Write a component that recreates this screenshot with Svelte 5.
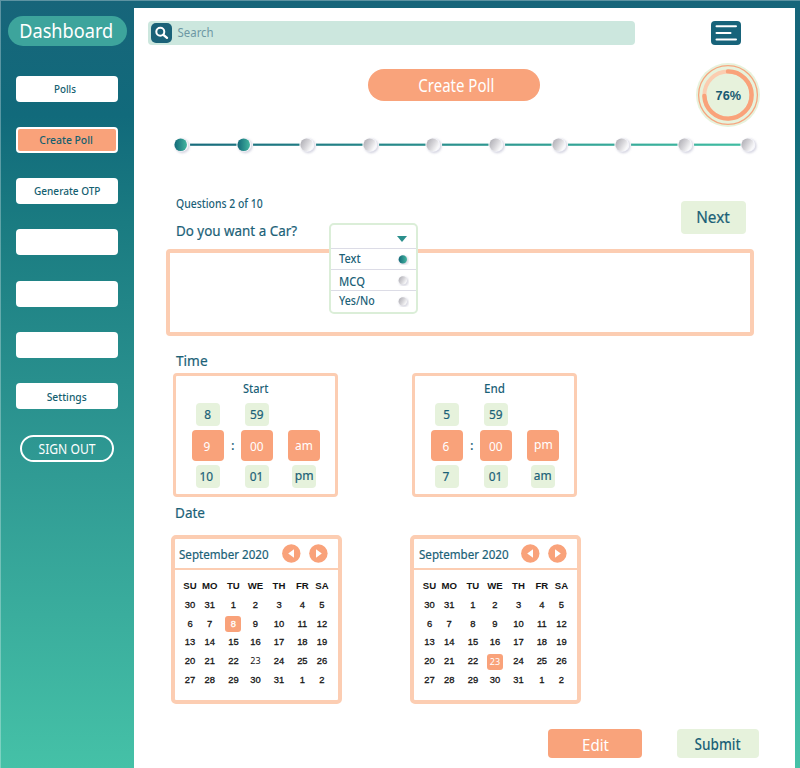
<script>
  const nav = [
    { text: 'Polls', w: 22, dx: -2, dy: 0.2 },
    { text: 'Create Poll', w: 53.5, active: true, dx: -0.7, dy: 0 },
    { text: 'Generate OTP', w: 66.5, dx: 0, dy: 0.6 },
    { text: '' },
    { text: '' },
    { text: '' },
    { text: 'Settings', w: 40, dx: -0.3, dy: 0.4 }
  ];

  const steps = Array.from({ length: 10 }, (_, i) => ({
    x: 9 + i * 63,
    done: i < 2
  }));

  const options = [
    { text: 'Text', w: 21.6, dy: 0 },
    { text: 'MCQ', w: 26, dy: 1.4 },
    { text: 'Yes/No', w: 35.8, dy: 0 }
  ];
  const chosen = 0;

  const times = [
    {
      title: 'Start', tw: 25.5,
      prev: ['8', '59'],
      now: [['9', 0], ['00', 0], ['am', -1.2]],
      next: ['10', '01', 'pm']
    },
    {
      title: 'End', tw: 21,
      prev: ['5', '59'],
      now: [['6', 0], ['00', 0], ['pm', -1.6]],
      next: ['7', '01', 'am']
    }
  ];
  const widths = { am: 17.8, pm: 18.8 };
  const tw = (s) => widths[s] ?? s.length * 6.8;

  const heads = ['SU', 'MO', 'TU', 'WE', 'TH', 'FR', 'SA'];
  const days = [30, 31, ...Array.from({ length: 31 }, (_, i) => i + 1), 1, 2];
  const calendars = [{ selected: 8 }, { selected: 23 }];
</script>

{#snippet label(text, w, size, cls = '', dx = 0, dy = 0)}
  <svg class="label {cls}" width={w} height={size}>
    <text x={dx} y={size * 0.857 + dy} font-size={size} textLength={w} lengthAdjust="spacingAndGlyphs">{text}</text>
  </svg>
{/snippet}

<div class="page">
  <aside>
    <div class="brand">{@render label('Dashboard', 94, 19, 'white', -1.8, 0)}</div>
    <nav>
      {#each nav as item}
        <button class:active={item.active}>
          {#if item.text}{@render label(item.text, item.w, 11.5, 'deep', item.dx, item.dy)}{/if}
        </button>
      {/each}
    </nav>
    <button class="signout">{@render label('SIGN OUT', 57, 13.8, 'white', -0.5, 0.5)}</button>
  </aside>

  <main>
    <header>
      <div class="search">
        <span class="glass">
          <svg width="21" height="20" viewBox="0 0 21 20">
            <circle cx="9.3" cy="8.8" r="4" fill="none" stroke="#fff" stroke-width="2" />
            <path d="M12.4 11.8 L16 14.8" stroke="#fff" stroke-width="2.4" stroke-linecap="round" />
          </svg>
        </span>
        {@render label('Search', 36, 12, 'muted', 0.6, 0)}
      </div>
      <button class="menu" aria-label="Menu">
        <svg width="30" height="24" viewBox="0 0 30 24" stroke="#fff" stroke-width="2" stroke-linecap="round">
          <path d="M5.5 5.3 H25 M5.5 12 H19.5 M5.5 18.6 H25" />
        </svg>
      </button>
    </header>

    <section class="hero">
      <div class="title">{@render label('Create Poll', 76, 17.2, 'white', 2.3, 1.4)}</div>
      <svg class="ring" width="66" height="66" viewBox="0 0 66 66">
        <circle cx="33" cy="33" r="32" fill="#e7f2dc" />
        <circle cx="33" cy="33" r="29.4" fill="none" stroke="#f6a67f" stroke-width="1.3" />
        <circle cx="33" cy="33" r="23.6" fill="none" stroke="#fbcdb0" stroke-width="4" />
        <path d="M33 9.4 A23.6 23.6 0 1 1 9.4 34" fill="none" stroke="#f9a27a" stroke-width="4.4" stroke-linecap="round" />
        <text x="20.6" y="38.2" font-size="12.8" textLength="25.4" lengthAdjust="spacingAndGlyphs" class="pct">76%</text>
      </svg>
    </section>

    <svg class="steps" width="590" height="24" viewBox="0 0 590 24">
      <defs>
        <linearGradient id="line" gradientUnits="userSpaceOnUse" x1="0" y1="0" x2="590" y2="0">
          <stop offset="0" stop-color="#17697b" /><stop offset="1" stop-color="#41bfa3" />
        </linearGradient>
        <linearGradient id="on"><stop offset="0.1" stop-color="#17707c" /><stop offset="1" stop-color="#44b6a0" /></linearGradient>
        <linearGradient id="off" x1="0" y1="0.2" x2="1" y2="0.8">
          <stop offset="0.05" stop-color="#b3b2b8" /><stop offset="0.5" stop-color="#d6d5d9" /><stop offset="0.9" stop-color="#fafafb" />
        </linearGradient>
        <filter id="soft" x="-50%" y="-50%" width="200%" height="200%"><feGaussianBlur stdDeviation="1.1" /></filter>
      </defs>
      {#each steps as s, i}
        {#if i < 9}<rect x={s.x + 9} y="10.6" width="46.5" height="2.2" fill="url(#line)" />{/if}
        <circle cx={s.x + 1.4} cy="13" r="7.2" fill="#c0c0d2" opacity="0.7" filter="url(#soft)" />
        <circle cx={s.x + 0.5} cy="12" r="6.8" fill="#f5f5fa" />
        <circle cx={s.x - 0.3} cy="11.8" r="6.3" fill={s.done ? 'url(#on)' : 'url(#off)'} />
      {/each}
    </svg>

    <section class="question">
      <div class="ask">
        {@render label('Questions 2 of 10', 86.6, 11.9, 'navy')}
        {@render label('Do you want a Car?', 121, 14.6, 'navy soft')}
      </div>
      <button class="pale next">{@render label('Next', 33.6, 16.2, 'navy soft', -0.8, -0.3)}</button>
      <div class="dropdown">
        <div class="picked"><svg width="10" height="6"><path d="M0 0 H10 L5 6 Z" fill="#2b8f8c" /></svg></div>
        {#each options as o, i}
          <div class="option">
            {@render label(o.text, o.w, 12, 'navy', 0, o.dy)}
            <svg width="12" height="12" viewBox="0 0 12 12">
              <circle cx="6.8" cy="7.4" r="4.6" fill="#d5d5df" filter="url(#soft)" />
              <circle cx="5.8" cy="6.4" r="4.2" fill={i === chosen ? 'url(#on)' : 'url(#off)'} />
            </svg>
          </div>
        {/each}
      </div>
    </section>

    <div class="answer"></div>

    <div class="heading time">{@render label('Time', 31.6, 14.6, 'navy soft')}</div>
    <section class="pair clocks">
      {#each times as t}
        <div class="clock">
          <div class="cap">{@render label(t.title, t.tw, 12, 'navy')}</div>
          <div class="row small">
            {#each t.prev as v}<span>{@render label(v, tw(v), 12.2, 'navy soft', v.length > 1 ? 0 : -0.7, 0.3)}</span>{/each}
          </div>
          <div class="row big">
            {#each t.now as v, i}
              <span>{@render label(v[0], tw(v[0]), 12.4, 'white', i ? 0 : -1.6, v[1] + (i ? 1.2 : 1.8))}</span>
              {#if i === 0}<div class="colon">{@render label(':', 3.6, 13, 'navy', 0, 0)}</div>{/if}
            {/each}
          </div>
          <div class="row small">
            {#each t.next as v, i}<span>{@render label(v, tw(v), 12.2, 'navy soft', i ? -0.3 : -1.6, i === 2 ? 0 : 0.6)}</span>{/each}
          </div>
        </div>
      {/each}
    </section>

    <div class="heading date">{@render label('Date', 30, 14.4, 'navy soft')}</div>
    <section class="pair cals">
      {#each calendars as c}
        <div class="cal">
          <div class="month">
            {@render label('September 2020', 89.6, 12.8, 'navy soft', 0, 0.8)}
            <svg class="arrows" width="46" height="19" viewBox="0 0 46 19">
              <circle cx="9.3" cy="9.5" r="9.2" fill="#f9a27a" />
              <circle cx="36.4" cy="9.5" r="9.2" fill="#f9a27a" />
              <path d="M12 5.2 V13.8 L6.2 9.5 Z M34 5.2 V13.8 L39.8 9.5 Z" fill="#fff" />
            </svg>
          </div>
          <div class="grid">
            {#each heads as h}<b>{h}</b>{/each}
            {#each days as d, i}
              <span class:alt={d === 23}><em class:sel={d === c.selected && i > 1}>{d}</em></span>
            {/each}
          </div>
        </div>
      {/each}
    </section>

    <footer>
      <button class="edit">{@render label('Edit', 27, 15.6, 'white', 0, 2)}</button>
      <button class="pale submit">{@render label('Submit', 46.2, 15.4, 'navy', -0.5, 0.8)}</button>
    </footer>
  </main>
</div>

<style>
  :global(body) { margin: 0; }
  .page {
    box-sizing: border-box; width: 800px; height: 768px; overflow: hidden;
    display: flex; padding: 8px 5px 0 0;
    background: linear-gradient(#17657a 0, #116a7b 15%, #1a7b81 29%, #2f9993 60%, #45c1a7 100%);
    box-shadow: inset 1px 1px 0 rgba(255, 255, 255, 0.3);
    font-family: 'Noto Sans', 'Open Sans', sans-serif;
  }
  button { border: 0; padding: 0; margin: 0; font: inherit; display: flex; align-items: center; justify-content: center; }
  .label { display: block; overflow: visible; flex: none; }
  .label text { fill: #1b6177; font-weight: 500; }
  .label.white text { fill: #fff; font-weight: 400; }
  .label.deep text { fill: #146070; }
  .label.muted text { fill: #6d98a4; font-weight: 400; }
  .label.soft text { font-weight: 400; stroke: #1b6177; stroke-width: 0.2px; }

  aside { width: 134px; flex: none; display: flex; flex-direction: column; }
  .brand {
    width: 119px; height: 30px; margin: 8px 0 0 8px; border-radius: 15px;
    background: #3da49c; display: flex; align-items: center; justify-content: center;
  }
  nav { display: flex; flex-direction: column; gap: 25.3px; margin: 29.5px 0 0 15.5px; }
  nav button { box-sizing: border-box; width: 102.5px; height: 26px; background: #fff; border-radius: 4px; }
  nav button.active { background: #f9a27a; border: 2px solid #fff; }
  .signout {
    box-sizing: border-box; width: 94px; height: 27px; margin: 25.7px 0 0 20px;
    border: 2px solid #fff; border-radius: 14px; background: none;
  }

  main { width: 661px; background: #fff; display: flex; flex-direction: column; }
  header { display: flex; padding: 13px 0 0 14px; gap: 76px; height: 24px; }
  .search {
    width: 487px; height: 24px; border-radius: 4px; background: #cce7de;
    display: flex; align-items: center; gap: 5px;
  }
  .glass { display: flex; margin-left: 3px; width: 21px; height: 20px; border-radius: 5px; background: #1a6278; }
  .menu { width: 30px; height: 24px; border-radius: 4px; background: #17637a; }

  .hero { display: flex; align-items: flex-start; margin: 16px 0 0 234px; height: 66px; gap: 155px; }
  .title {
    width: 172px; height: 32px; margin-top: 8px; border-radius: 16px; background: #f9a37b;
    display: flex; align-items: center; justify-content: center;
  }
  .ring { flex: none; margin-top: 0.5px; }
  .pct { font-family: 'Liberation Sans', sans-serif; font-weight: 700; fill: #185a72; }
  .steps { display: block; flex: none; margin: 5.5px 0 0 38px; overflow: visible; }

  .question { position: relative; display: flex; justify-content: space-between; margin: 44.5px 49px 0 42px; height: 48px; }
  .ask { display: flex; flex-direction: column; gap: 13.6px; margin-top: -3px; }
  .pale { background: #e6f2dc; border-radius: 4px; }
  .next { width: 65px; height: 33px; }
  .dropdown {
    position: absolute; z-index: 1; left: 152.5px; top: 22px; box-sizing: border-box; width: 89.5px; height: 91px;
    border: 2px solid #dbeed8; border-radius: 5px; background: #fff;
  }
  .picked { height: 23px; display: flex; align-items: center; justify-content: flex-end; padding: 4px 9.5px 0 0; box-sizing: border-box; }
  .option {
    height: 20px; display: flex; align-items: center; justify-content: space-between;
    padding: 0 7px 0 8px; border-top: 1px solid #dcdce6;
  }
  .answer {
    box-sizing: border-box; width: 588px; height: 87px; margin-left: 32px; flex: none;
    border: 4px solid #fccdb2; border-radius: 4px;
  }

  .heading { flex: none; }
  .time { height: 20.5px; padding: 16.5px 0 0 42px; }
  .date { height: 28.5px; padding: 9px 0 0 41px; }
  .pair { display: flex; flex: none; }
  .clocks { gap: 74px; margin-left: 39px; }
  .clock {
    box-sizing: border-box; width: 165px; height: 124px; border: 3px solid #fccdb2; border-radius: 4px;
    display: flex; flex-direction: column;
  }
  .cap { display: flex; justify-content: center; margin: 7px 0 8.5px; height: 11.5px; }
  .row { display: flex; align-items: center; padding-left: 16px; }
  .row span { display: flex; align-items: center; justify-content: center; border-radius: 4px; }
  .small { padding-left: 20px; gap: 25px; }
  .small span { width: 24px; height: 23px; background: #e6f2dc; }
  .small span:nth-child(3) { margin-left: -2px; }
  .big { margin: 4px 0 4.5px; }
  .big span { width: 32px; height: 30.5px; background: #f9a27a; }
  .colon { width: 17px; display: flex; justify-content: center; }
  .big span:last-child { margin-left: 15px; }

  .cals { gap: 68.5px; margin-left: 36.5px; }
  .cal { box-sizing: border-box; width: 171px; height: 169px; border: 4.5px solid #fccdb2; border-radius: 5px; }
  .month { height: 29.5px; display: flex; align-items: center; gap: 13px; padding-left: 4.5px; border-bottom: 2px solid #fccdb2; }
  .grid {
    display: grid; grid-template-columns: 20px 19.4px 28px 16px 31.2px 15.6px 23.6px;
    grid-auto-rows: 18.8px; padding: 7px 0 0 5.5px;
    font: 9.4px/18.8px 'Liberation Sans', sans-serif; color: #151515;
  }
  .grid b, .grid span { display: flex; align-items: center; justify-content: center; }
  .grid span { -webkit-text-stroke: 0.3px currentColor; }
  .grid b { font-size: 9.6px; }
  em { font-style: normal; }
  .grid .alt { font-family: 'Noto Sans', sans-serif; font-size: 9px; -webkit-text-stroke: 0; }
  .sel { width: 16px; height: 16px; line-height: 16px; text-align: center; border-radius: 3px; background: #f9a27a; color: #fff; flex: none; }

  footer { display: flex; gap: 35px; margin: 25.5px 0 0 414px; }
  .edit { width: 94px; height: 29px; border-radius: 4px; background: #f9a37b; }
  .submit { width: 82px; height: 28.5px; }
</style>
